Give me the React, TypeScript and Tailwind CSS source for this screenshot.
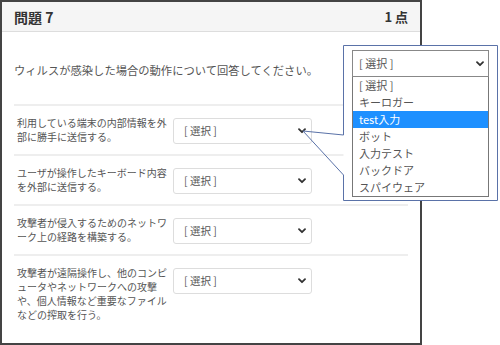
const rows = [
  "利用している端末の内部情報を外部に勝手に送信する。",
  "ユーザが操作したキーボード内容を外部に送信する。",
  "攻撃者が侵入するためのネットワーク上の経路を構築する。",
  "攻撃者が遠隔操作し、他のコンピュータやネットワークへの攻撃や、個人情報など重要なファイルなどの搾取を行う。",
];

const options = ["[ 選択 ]", "キーロガー", "test入力", "ボット", "入力テスト", "バックドア", "スパイウェア"];

function Chevron({ className }: { className?: string }) {
  return (
    <svg width="8" height="6" viewBox="0 0 8 6" className={className}>
      <path d="M1 1.2 L4 4.2 L7 1.2" fill="none" stroke="#333" strokeWidth="1.8" strokeLinecap="round" strokeLinejoin="round" />
    </svg>
  );
}

export default function App() {
  return (
    <div
      className="relative w-[500px] h-[345px] bg-white overflow-hidden"
      style={{ fontFamily: '"Noto Sans CJK JP", "Noto Sans", sans-serif' }}
    >
      {/* Question card */}
      <div className="w-[422px] h-[345px] border-2 border-[#444] flex flex-col overflow-hidden">
        <div className="shrink-0 h-[30px] bg-[#f5f5f5] border-b border-[#ddd] flex items-center justify-between px-3 text-[#333] font-bold">
          <span className="text-[14px] leading-none">問題 7</span>
          <span className="text-[13px] leading-none">1 点</span>
        </div>
        <div className="shrink-0 px-3">
          <p className="pt-[30px] pb-[26px] text-[11.3px] leading-[16px] text-[#555]">
            ウィルスが感染した場合の動作について回答してください。
          </p>
          {rows.map((r, i) => (
            <div key={i} className="h-[50px] border-t-2 border-[#eee] pt-3 flex items-start gap-[3px]">
              <p className="w-[156px] shrink-0 pl-[3px] -mt-[2px] text-[10px] leading-[14px] text-[#555]">{r}</p>
              <div className="shrink-0 w-[139px] h-[26px] border border-[#ddd] rounded-[3px] bg-white flex items-center justify-between pl-[10px] pr-[5px]">
                <span className="text-[10.5px] text-[#555]">[ 選択 ]</span>
                <Chevron />
              </div>
            </div>
          ))}
        </div>
      </div>

      {/* Callout popup */}
      <svg className="absolute left-0 top-0 pointer-events-none" width="500" height="345">
        <rect x="343.5" y="45.5" width="154" height="155" fill="#fff" />
        <path
          d="M343.5 135 V45.5 H497.5 V200.5 H343.5 V175 L303 131 Z"
          fill="none"
          stroke="#5a72a8"
          strokeWidth="1"
        />
      </svg>
      <div className="absolute left-[352px] top-[50px] w-[137px]">
        <div className="h-[27px] border border-[#888] bg-white flex items-center justify-between pl-[6px] pr-[4px]">
          <span className="text-[11px] text-[#555]">[ 選択 ]</span>
          <Chevron />
        </div>
        <div className="border border-t-0 border-[#777] bg-white">
          {options.map((o, i) => (
            <div
              key={i}
              className={
                i === 2
                  ? "h-[17px] flex items-center pl-[6px] text-[11px] bg-[#1e90ff] text-white"
                  : "h-[17px] flex items-center pl-[6px] text-[11px] text-[#555]"
              }
            >
              {o}
            </div>
          ))}
        </div>
      </div>
    </div>
  );
}
